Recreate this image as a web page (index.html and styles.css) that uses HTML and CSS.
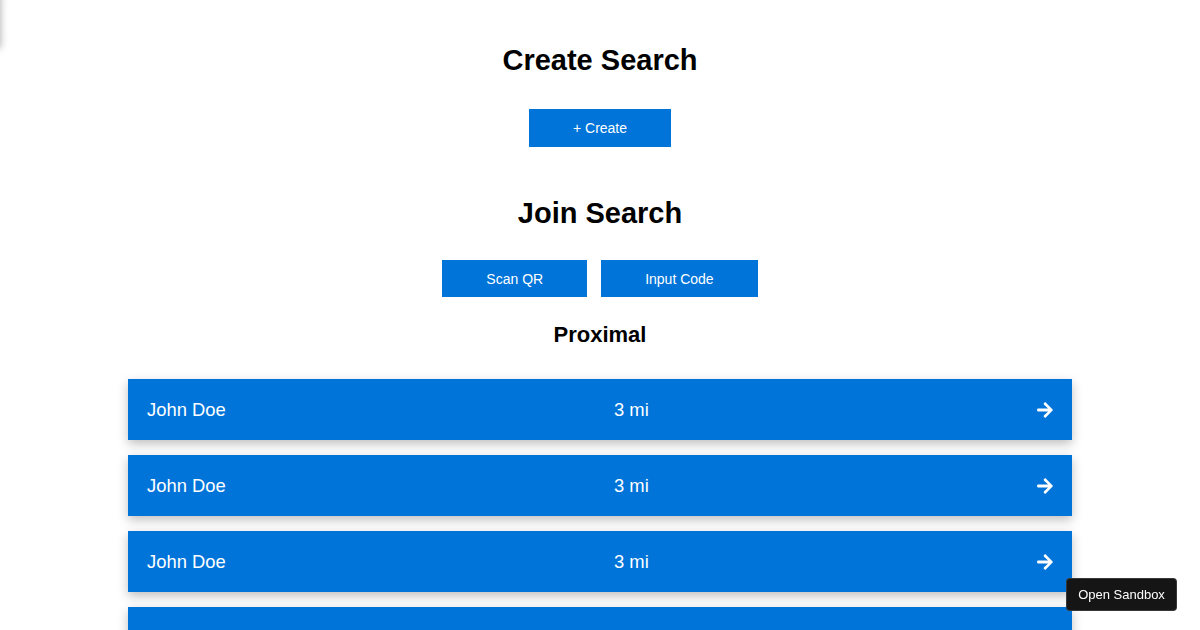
FILE: index.html
```html
<!DOCTYPE html>
<html lang="en">
<head>
<meta charset="utf-8">
<title>Search</title>
<link rel="stylesheet" href="styles.css">
</head>
<body>
<div class="edge-shadow"></div>
<main class="page">
  <h1 class="title">Create Search</h1>
  <div class="actions first">
    <button class="btn">+ Create</button>
  </div>
  <h1 class="title join">Join Search</h1>
  <div class="actions second">
    <button class="btn">Scan QR</button>
    <button class="btn">Input Code</button>
  </div>
  <h2 class="subtitle">Proximal</h2>
  <ul class="list">
    <li class="row"><span class="name">John Doe</span><span class="dist">3 mi</span><svg class="arrow" viewBox="0 0 448 512"><path fill="#fff" d="M190.5 66.9l22.2-22.2c9.4-9.4 24.6-9.4 33.9 0L441 239c9.4 9.4 9.4 24.6 0 33.9L246.6 467.3c-9.4 9.4-24.6 9.4-33.9 0l-22.2-22.2c-9.5-9.5-9.3-25 .4-34.3L311.4 296H24c-13.3 0-24-10.7-24-24v-32c0-13.3 10.7-24 24-24h287.4L190.9 101.2c-9.8-9.3-10-24.8-.4-34.3z"/></svg></li>
    <li class="row"><span class="name">John Doe</span><span class="dist">3 mi</span><svg class="arrow" viewBox="0 0 448 512"><path fill="#fff" d="M190.5 66.9l22.2-22.2c9.4-9.4 24.6-9.4 33.9 0L441 239c9.4 9.4 9.4 24.6 0 33.9L246.6 467.3c-9.4 9.4-24.6 9.4-33.9 0l-22.2-22.2c-9.5-9.5-9.3-25 .4-34.3L311.4 296H24c-13.3 0-24-10.7-24-24v-32c0-13.3 10.7-24 24-24h287.4L190.9 101.2c-9.8-9.3-10-24.8-.4-34.3z"/></svg></li>
    <li class="row"><span class="name">John Doe</span><span class="dist">3 mi</span><svg class="arrow" viewBox="0 0 448 512"><path fill="#fff" d="M190.5 66.9l22.2-22.2c9.4-9.4 24.6-9.4 33.9 0L441 239c9.4 9.4 9.4 24.6 0 33.9L246.6 467.3c-9.4 9.4-24.6 9.4-33.9 0l-22.2-22.2c-9.5-9.5-9.3-25 .4-34.3L311.4 296H24c-13.3 0-24-10.7-24-24v-32c0-13.3 10.7-24 24-24h287.4L190.9 101.2c-9.8-9.3-10-24.8-.4-34.3z"/></svg></li>
    <li class="row"><span class="name">John Doe</span><span class="dist">3 mi</span><svg class="arrow" viewBox="0 0 448 512"><path fill="#fff" d="M190.5 66.9l22.2-22.2c9.4-9.4 24.6-9.4 33.9 0L441 239c9.4 9.4 9.4 24.6 0 33.9L246.6 467.3c-9.4 9.4-24.6 9.4-33.9 0l-22.2-22.2c-9.5-9.5-9.3-25 .4-34.3L311.4 296H24c-13.3 0-24-10.7-24-24v-32c0-13.3 10.7-24 24-24h287.4L190.9 101.2c-9.8-9.3-10-24.8-.4-34.3z"/></svg></li>
  </ul>
</main>
<button class="sandbox">Open Sandbox</button>
</body>
</html>
```

FILE: styles.css
```css
html, body {
  margin: 0;
  padding: 0;
  background: #fff;
  height: 630px;
  overflow: hidden;
}
body {
  font-family: "Liberation Sans", Arial, sans-serif;
  color: #000;
}
.edge-shadow {
  position: absolute;
  left: -60px;
  top: -10px;
  width: 60px;
  height: 56px;
  background: #fff;
  box-shadow: 0 2px 8px rgba(0, 0, 0, 0.35);
}
.page {
  padding-top: 43px;
  display: flex;
  flex-direction: column;
  align-items: center;
}
.title {
  margin: 0;
  font-size: 29px;
  line-height: 34px;
  font-weight: bold;
}
.title.join {
  margin-top: 49px;
}
.actions {
  display: flex;
  gap: 14px;
}
.actions.first {
  margin-top: 32px;
}
.actions.second {
  margin-top: 30px;
}
.btn {
  background: #0074d9;
  color: #fff;
  border: none;
  font-family: "Liberation Sans", Arial, sans-serif;
  font-size: 14px;
  line-height: 16px;
  padding: 11px 44px;
  height: 38px;
  cursor: pointer;
}
.actions.second .btn {
  height: 37px;
  padding: 10px 44px;
}
.subtitle {
  margin: 25px 0 0;
  font-size: 22px;
  line-height: 26px;
  font-weight: bold;
}
.list {
  list-style: none;
  margin: 31px 0 0;
  padding: 0;
  width: 944px;
  display: flex;
  flex-direction: column;
  gap: 15px;
}
.row {
  background: #0074d9;
  color: #fff;
  height: 61px;
  padding: 0 19px;
  display: flex;
  align-items: center;
  justify-content: space-between;
  font-size: 18.4px;
  box-shadow: 0 4px 10px rgba(0, 0, 0, 0.25);
}
.arrow {
  width: 16px;
  height: 18px;
  display: block;
}
.sandbox {
  position: fixed;
  right: 23px;
  bottom: 19px;
  width: 111px;
  height: 33px;
  background: #151515;
  color: #fff;
  border: 1px solid rgba(255, 255, 255, 0.15);
  border-radius: 4px;
  font-family: "Liberation Sans", Arial, sans-serif;
  font-size: 13px;
  padding: 0;
}
```
